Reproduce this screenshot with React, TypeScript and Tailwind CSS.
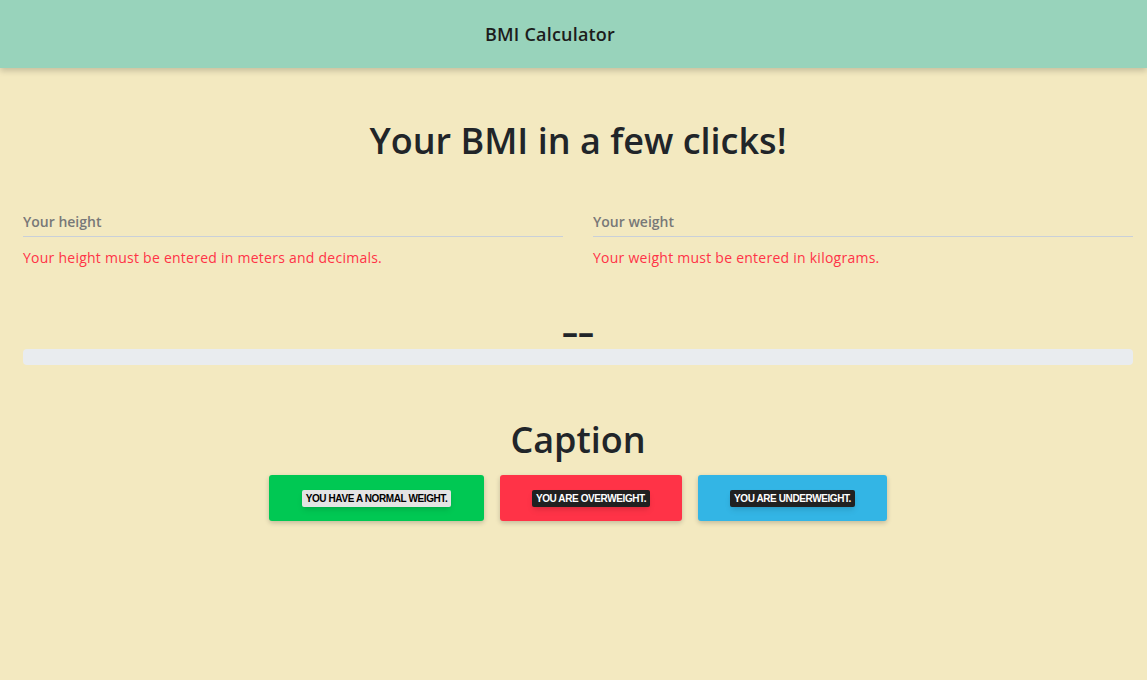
import React, { useState } from "react";

const FONT = { fontFamily: "'Open Sans', 'Noto Sans', sans-serif" };

const Field = ({ label, hint }: { label: string; hint: string }) => {
  const [value, setValue] = useState("");
  return (
    <div className="flex-1">
      <input
        value={value}
        onChange={(e) => setValue(e.target.value)}
        placeholder={label}
        className="w-full h-[36px] pt-[6px] bg-transparent border-b border-[#c9d0d9] text-[14px] text-[#333] placeholder:text-[#787878] font-semibold outline-none"
      />
      <p className="mt-[10px] text-[14px] tracking-[0.25px] text-[#ff3347]">{hint}</p>
    </div>
  );
};

const Badge = ({ text, light }: { text: string; light?: boolean }) => (
  <span
    className={`px-[4px] py-[1px] rounded-[2px] text-[10px] font-black uppercase tracking-[-0.4px] shadow-md ${
      light ? "bg-[#e4e4e4] text-black" : "bg-[#212121] text-white"
    }`}
    style={{ fontFamily: "'Liberation Sans', Arial, sans-serif" }}
  >
    {text}
  </span>
);

export default function App() {
  return (
    <div className="min-h-[680px] bg-[#f3e9c0] text-[#212529]" style={FONT}>
      {/* Header */}
      <header className="h-[68px] bg-[#98d3bb] shadow-[0_3px_6px_rgba(0,0,0,0.18)] flex items-center pl-[485px]">
        <span className="text-[18px] font-semibold tracking-[0.2px] text-[#1c1c1c]">BMI Calculator</span>
      </header>

      <main className="ml-[23px] w-[1110px]">
        <h1 className="mt-[51px] text-center text-[36px] font-semibold leading-[44px]">
          Your BMI in a few clicks!
        </h1>

        {/* Inputs */}
        <div className="mt-[38px] flex gap-[30px]">
          <Field label="Your height" hint="Your height must be entered in meters and decimals." />
          <Field label="Your weight" hint="Your weight must be entered in kilograms." />
        </div>

        {/* Result */}
        <div className="mt-[52px] text-center text-[32px] font-bold leading-[24px]">––</div>
        <div className="mt-[5px] h-[16px] rounded-[4px] bg-[#e9ecef]" />

        {/* Caption */}
        <h2 className="mt-[53px] text-center text-[36px] font-semibold leading-[44px]">Caption</h2>
        <div className="mt-[13px] flex justify-center gap-[16px]">
          <div className="w-[215px] h-[46px] rounded-[3px] bg-[#00c853] shadow-[0_2px_5px_rgba(0,0,0,0.2)] flex items-center justify-center">
            <Badge text="You have a normal weight." light />
          </div>
          <div className="w-[182px] h-[46px] rounded-[3px] bg-[#ff3347] shadow-[0_2px_5px_rgba(0,0,0,0.2)] flex items-center justify-center">
            <Badge text="You are overweight." />
          </div>
          <div className="w-[189px] h-[46px] rounded-[3px] bg-[#33b5e5] shadow-[0_2px_5px_rgba(0,0,0,0.2)] flex items-center justify-center">
            <Badge text="You are underweight." />
          </div>
        </div>
      </main>
    </div>
  );
}
